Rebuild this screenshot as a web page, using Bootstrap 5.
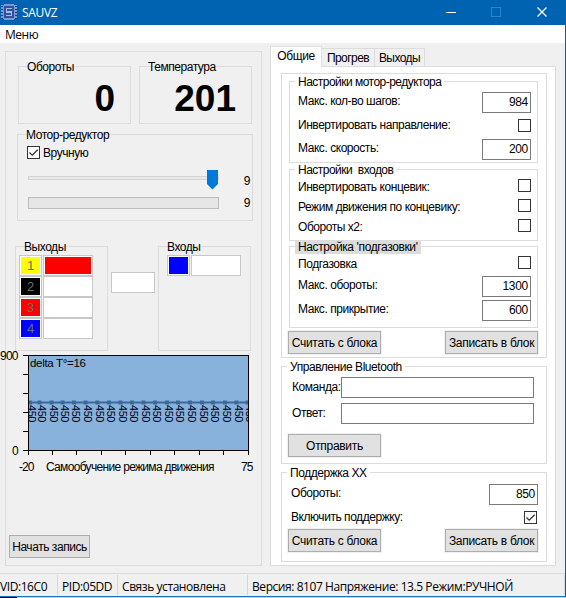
<!DOCTYPE html>
<html lang="ru">
<head>
<meta charset="utf-8">
<title>SAUVZ</title>
<link rel="stylesheet" href="https://cdn.jsdelivr.net/npm/bootstrap@5.3.0/dist/css/bootstrap.min.css">
<style>
html,body{height:598px;overflow:hidden}
body{font:12px/14px "Liberation Sans",Arial,sans-serif;letter-spacing:-.45px;color:#000;background:#f0f0f0}
.window{width:566px;height:597px;border-right:1px solid #0063b1;border-bottom:1px solid #1874bd;background:#f0f0f0}
.titlebar{height:25px;background:#0063b1;color:#fff;font:12px/25px "Open Sans","Noto Sans",sans-serif;letter-spacing:-.3px}
.app-name{margin-left:4px}
.menubar{height:18px;background:#fff;padding-left:5px;font:12px/20px "Open Sans","Noto Sans",sans-serif;letter-spacing:-.5px}
.work{height:530px}
.grp{border:1px solid #dcdcdc;background:inherit;display:flex;flex-direction:column}
.grp-title{height:14px;margin-top:-7px;margin-left:5px;padding:0 3px;width:fit-content;background:inherit;white-space:pre;flex:none}
.grp-body{flex:1;display:flex;flex-direction:column;justify-content:space-between}
.left{width:257px;height:515px;margin:8px 0 0 5px}
.meters{margin:14px 0 0 12px;gap:8px;background:inherit}
.meter{width:113px;height:58px}
.meter .value{font:bold 37px/36px "Liberation Sans",Arial,sans-serif;letter-spacing:0;padding-right:15px;margin-top:7px}
.motor{width:236px;height:87px;margin:10px 0 0 11px}
.motor-check{margin:4px 0 0 9px;gap:3px}
.chk{width:13px;height:13px;border:1px solid #333;background:#fff;flex:none;display:block}
.slide-row{margin-left:10px;width:222px;margin-top:6px}
.slide-row.first{margin-top:10px}
.rail{width:191px;height:20px;position:relative}
.rail::before{content:"";display:block;height:4px;margin-top:6px;border:1px solid #d4d4d4;background:#e7eaea}
.rail svg{position:absolute;right:1px;top:0}
.gauge{width:191px;height:12px;border:1px solid #bcbcbc;background:#e6e6e6}
.ports{margin:25px 0 0 9px;height:105px;background:inherit}
.port-group{width:93px;height:105px}
.port-list{margin:1px 0 0 3px}
.port-list.inputs{margin-left:8px}
.port-line{gap:1px;height:21px}
.cell{border:1px solid #c8c8c8;background:#fff;height:21px;padding:1px}
.cell-s{width:23px}.cell-l{width:50px}.cell-m{width:44px;margin:26px 3px 0 3px}
.cell>div{height:17px;text-align:center;line-height:17px;font-size:13px;color:#6d6d6d}
.c-yellow{background:#ff0}.c-black{background:#000}.c-red{background:#f00}.c-blue{background:#00f}
.chart{display:block;margin-left:-6px;margin-top:-2px;font-size:12px}
.chart .delta{letter-spacing:0;font-size:11.5px}
.btn.old{border:1px solid #adadad;border-radius:0;background:#e1e1e1;color:#000;font:inherit;letter-spacing:-.3px;padding:0;height:23px;width:93px;box-shadow:0 0 0 1px #f0f0f0;flex:none}
.btn.start{width:81px;margin:56px 0 0 3px;letter-spacing:-.45px}
.right{width:286px;margin:3px 0 0 8px}
.nav-tabs.tabs{border:0;height:20px;align-items:flex-end;font-size:12px;letter-spacing:-.55px}
.tabs .nav-link{border:1px solid #dcdcdc;border-bottom:0;border-left:0;border-radius:0;padding:0;margin:0;height:18px;line-height:18px;color:#000;text-align:center;background:#f0f0f0}
.tabs .nav-link.active{border-left:1px solid #dcdcdc;background:#fff;height:21px;line-height:19px;margin-bottom:-1px;position:relative;letter-spacing:-.4px}
.t1{width:52px}.t2{width:53px}.t3{width:50px}
.page{height:500px;border:1px solid #dcdcdc;background:#fff}
.outer{width:266px;margin-left:10px}
.outer.general{margin-top:6px;height:285px}
.outer.bluetooth{margin-top:8px;height:98px}
.outer.idle{margin-top:8px;height:90px}
.inner{width:249px;margin-left:7px}
.inner .grp-title{letter-spacing:-.52px}
.in-motor{margin-top:7px;height:82px}.in-motor .grp-body{padding:3px 0 2px}
.in-motor .field.short{margin:-1px 0 1px;line-height:12px}
.in-ports{margin-top:6px;height:72px}.in-ports .grp-body{padding:2px 0 8px}
.in-gas{margin-top:5px;height:82px}.in-gas .grp-body{padding:2px 0 6px}
.in-gas .grp-title{background:#dcdcdc;letter-spacing:-.38px}
.field{padding:0 6px 0 8px;height:21px;display:flex;justify-content:space-between;line-height:18px}
.field.short{height:13px;line-height:16px}
.in-gas .field.short{margin-bottom:4px}
.actions{margin:3px 8px 0 6px}
.idle .actions{margin-top:5px}
.cmd{margin:3px 12px 0 10px;line-height:20px}
.cmd+.cmd{margin-top:5px}
.btn.send{margin:10px 0 0 6px}
.idle .rpm{margin:4px 8px 0 9px;line-height:18px}
.idle .keep{margin:6px 9px 0 9px;height:13px;line-height:12px}
.num{width:49px;height:21px;border:1px solid #7a7a7a;background:#fff;text-align:right;padding:0 2px;line-height:19px;letter-spacing:-.3px}
.wide{width:193px;height:21px;border:1px solid #7a7a7a;background:#fff}
.status{height:23px;border-top:1px solid #dadada;font:12px/23px "Open Sans","Noto Sans",sans-serif;letter-spacing:-.43px}
.status>div{white-space:pre;height:20px;margin-top:1px;border-right:1px solid #d5d5d5;padding-left:4px}
.status .s1{width:58px;padding-left:0}.s2{width:60px}.s3{width:130px}
.bottom-edge{height:1px;background:linear-gradient(90deg,#000 17px,#b9d6e8 17px)}
</style>
</head>
<body>
<div class="window">
  <header class="titlebar d-flex">
    <svg width="18" height="25" viewBox="0 0 18 25" shape-rendering="crispEdges"><path d="M1 5h3v-1h10v1h3v14h-3v1h-10v-1h-3z" fill="#7799d2"/><path d="M1 6.500h2M1 9.500h2M1 12.500h2M1 15.500h2M1 18.500h2M15 6.500h2M15 9.500h2M15 12.500h2M15 15.500h2M15 18.500h2" stroke="#27377e"/><path d="M4 6h10v12H4z" fill="#33509b"/><path d="M12 8.500H6.500V12H11.500V15.500H6" fill="none" stroke="#a0bfe8" stroke-width="1.500"/></svg>
    <span class="app-name">SAUVZ</span>
    <svg class="ms-auto" width="120" height="25" viewBox="446 0 120 25" fill="none"><path d="M447 12.500h10" stroke="#fff"/><rect x="492.500" y="7.500" width="9" height="9" stroke="#2c83ca"/><path d="M538.500 7.500l9 9M547.500 7.500l-9 9" stroke="#fff" stroke-width="1.200"/></svg>
  </header>
  <nav class="menubar">Меню</nav>
  <main class="work d-flex align-items-start">
    <section class="left grp">
      <div class="meters d-flex">
        <div class="grp meter"><div class="grp-title">Обороты</div><div class="value text-end">0</div></div>
        <div class="grp meter"><div class="grp-title">Температура</div><div class="value text-end">201</div></div>
      </div>
      <div class="grp motor">
        <div class="grp-title">Мотор-редуктор</div>
        <div class="motor-check d-flex"><span class="chk"><svg class="d-block" width="11" height="11" viewBox="0 0 11 11"><path d="M1.500 5.500l2.700 2.700L9.700 2.700" fill="none" stroke="#333" stroke-width="1.300"/></svg></span><span>Вручную</span></div>
        <div class="slide-row first d-flex justify-content-between"><div class="rail"><svg width="11" height="20" viewBox="0 0 11 20"><path d="M0 0h11v14l-5.500 5.500L0 14z" fill="#0078d7"/></svg></div><span class="pt-1">9</span></div>
        <div class="slide-row d-flex justify-content-between align-items-center"><div class="gauge"></div><span>9</span></div>
      </div>
      <div class="ports d-flex">
        <div class="grp port-group">
          <div class="grp-title">Выходы</div>
          <div class="port-list">
            <div class="port-line d-flex"><div class="cell cell-s"><div class="c-yellow">1</div></div><div class="cell cell-l"><div class="c-red"></div></div></div>
            <div class="port-line d-flex"><div class="cell cell-s"><div class="c-black">2</div></div><div class="cell cell-l"></div></div>
            <div class="port-line d-flex"><div class="cell cell-s"><div class="c-red">3</div></div><div class="cell cell-l"></div></div>
            <div class="port-line d-flex"><div class="cell cell-s"><div class="c-blue">4</div></div><div class="cell cell-l"></div></div>
          </div>
        </div>
        <div class="cell cell-m"></div>
        <div class="grp port-group">
          <div class="grp-title">Входы</div>
          <div class="port-list inputs">
            <div class="port-line d-flex"><div class="cell cell-s"><div class="c-blue"></div></div><div class="cell cell-l"></div></div>
          </div>
        </div>
      </div>
      <svg class="chart" width="256" height="130" viewBox="0 349 256 130">
        <rect x="28" y="355" width="221" height="95" fill="#88b1dc"/>
        <clipPath id="plot"><rect x="28" y="355" width="220" height="95"/></clipPath>
        <g id="series" clip-path="url(#plot)"><path d="M28 402.500H248" stroke="#386b9c" stroke-width="2"/></g>
        <path d="M28.500 355.500H248.500V450.500H28.500zM23 355.500h5M23 374.500h5M23 393.500h5M23 412.500h5M23 431.500h5M23 450.500h5M28.500 450v5M52.500 450v5M76.500 450v5M101.500 450v5M125.500 450v5M150.500 450v5M174.500 450v5M199.500 450v5M223.500 450v5M248.500 450v5" fill="none" stroke="#000"/>
        <text class="delta" x="30" y="367" textLength="56">delta T°=16</text>
        <text x="0" y="359.500" textLength="18">900</text><text x="12" y="454.500">0</text>
        <text x="19" y="471" textLength="15">-20</text><text x="46" y="471" textLength="168">Самообучение режима движения</text><text x="241" y="471" textLength="12">75</text>
      </svg>
      <button class="btn old start">Начать запись</button>
    </section>
    <section class="right">
      <ul class="nav nav-tabs tabs flex-nowrap">
        <li><a class="nav-link active t1">Общие</a></li><li><a class="nav-link t2">Прогрев</a></li><li><a class="nav-link t3">Выходы</a></li>
      </ul>
      <div class="page">
        <div class="grp outer general">
          <div class="grp inner in-motor"><div class="grp-title">Настройки мотор-редуктора</div>
            <div class="grp-body">
              <div class="field"><span>Макс. кол-во шагов:</span><div class="num">984</div></div>
              <div class="field short"><span>Инвертировать направление:</span><span class="chk"></span></div>
              <div class="field"><span>Макс. скорость:</span><div class="num">200</div></div>
            </div></div>
          <div class="grp inner in-ports"><div class="grp-title">Настройки  входов</div>
            <div class="grp-body">
              <div class="field short"><span>Инвертировать концевик:</span><span class="chk"></span></div>
              <div class="field short"><span>Режим движения по концевику:</span><span class="chk"></span></div>
              <div class="field short"><span>Обороты x2:</span><span class="chk"></span></div>
            </div></div>
          <div class="grp inner in-gas"><div class="grp-title">Настройка 'подгазовки'</div>
            <div class="grp-body">
              <div class="field short"><span>Подгазовка</span><span class="chk"></span></div>
              <div class="field"><span>Макс. обороты:</span><div class="num">1300</div></div>
              <div class="field"><span>Макс. прикрытие:</span><div class="num">600</div></div>
            </div></div>
          <div class="actions d-flex justify-content-between"><button class="btn old">Считать с блока</button><button class="btn old">Записать в блок</button></div>
        </div>
        <div class="grp outer bluetooth"><div class="grp-title">Управление Bluetooth</div>
          <div class="cmd d-flex justify-content-between"><span>Команда:</span><div class="wide"></div></div>
          <div class="cmd d-flex justify-content-between"><span>Ответ:</span><div class="wide"></div></div>
          <button class="btn old send">Отправить</button>
        </div>
        <div class="grp outer idle"><div class="grp-title">Поддержка ХХ</div>
          <div class="rpm d-flex justify-content-between"><span>Обороты:</span><div class="num">850</div></div>
          <div class="keep d-flex justify-content-between"><span>Включить поддержку:</span><span class="chk"><svg class="d-block" width="11" height="11" viewBox="0 0 11 11"><path d="M1.500 5.500l2.700 2.700L9.700 2.700" fill="none" stroke="#333" stroke-width="1.300"/></svg></span></div>
          <div class="actions d-flex justify-content-between"><button class="btn old">Считать с блока</button><button class="btn old">Записать в блок</button></div>
        </div>
      </div>
    </section>
  </main>
  <footer class="status d-flex"><div class="s1">VID:16C0</div><div class="s2">PID:05DD</div><div class="s3">Связь установлена</div><div class="flex-fill">Версия: 8107 Напряжение: 13.5 Режим:РУЧНОЙ</div></footer>
</div>
<div class="bottom-edge"></div>
<script src="https://cdn.jsdelivr.net/npm/bootstrap@5.3.0/dist/js/bootstrap.bundle.min.js"></script>
<script>
// Series markers and their rotated value labels
const xs=[30,39.5,51.5,62.5,74,85.5,97.5,109,120.5,132,143.5,155,167,178,190,202,213,225,236.5,247.5];
document.getElementById('series').innerHTML+=xs.map(x=>
  `<rect x="${x-2}" y="400.500" width="4" height="4" fill="#386b9c"/><text transform="translate(${x-2} 405) rotate(90)" textLength="17" font-size="11" fill="#000010">450</text>`).join('');
</script>
</body>
</html>
